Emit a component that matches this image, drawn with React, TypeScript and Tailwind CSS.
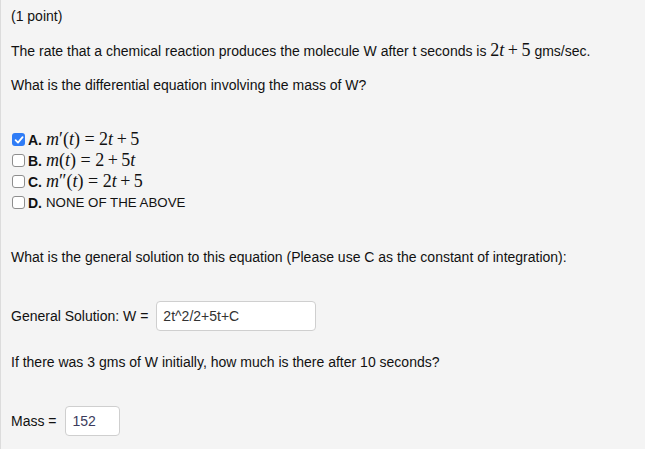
import React from 'react';

const sans = "font-['Helvetica','Liberation_Sans',Arial,sans-serif]";
const serif = "font-['Liberation_Serif','Times_New_Roman',serif]";

function M({ children }: { children: React.ReactNode }) {
    return <span className={`${serif} text-[18px] leading-none`}>{children}</span>;
}

function I({ children }: { children: React.ReactNode }) {
    return <i>{children}</i>;
}

// operator with MathJax-like spacing
function Op({ children, rel }: { children: React.ReactNode; rel?: boolean }) {
    return <span className={rel ? 'mx-[4.5px]' : 'mx-[3.5px]'}>{children}</span>;
}

function Box({ checked }: { checked?: boolean }) {
    return checked ? (
        <span className="inline-flex w-[13px] h-[13px] rounded-[3px] bg-[#2f7cf6] items-center justify-center">
            <svg width="10" height="10" viewBox="0 0 10 10">
                <path d="M1.6 5.2 L4 7.6 L8.6 2.2" fill="none" stroke="white" strokeWidth="1.8" strokeLinecap="round" strokeLinejoin="round" />
            </svg>
        </span>
    ) : (
        <span className="inline-block w-[13px] h-[13px] rounded-[3px] border border-[#8e8e8e] bg-white" />
    );
}

export default function App() {
    const options = [
        { key: 'A.', checked: true, body: <M><I>m</I>′(<I>t</I>)<Op rel>=</Op>2<I>t</I><Op>+</Op>5</M> },
        { key: 'B.', checked: false, body: <M><I>m</I>(<I>t</I>)<Op rel>=</Op>2<Op>+</Op>5<I>t</I></M> },
        { key: 'C.', checked: false, body: <M><I>m</I>″(<I>t</I>)<Op rel>=</Op>2<I>t</I><Op>+</Op>5</M> },
        { key: 'D.', checked: false, body: <span className="text-[13.3px]">NONE OF THE ABOVE</span> },
    ];

    return (
        <div className={`w-[645px] h-[449px] bg-[#f4f4f4] border-l border-[#dcdcdc] pl-[10px] pt-[7px] text-[14px] leading-[18px] text-[#111] ${sans}`}>
            <p>(1 point)</p>
            <p className="mt-[16px]">
                The rate that a chemical reaction produces the molecule W after t seconds is <M>2<I>t</I><Op>+</Op>5</M> gms/sec.
            </p>
            <p className="mt-[16px]">What is the differential equation involving the mass of W?</p>

            <div className="mt-[35px] flex flex-col">
                {options.map(o => (
                    <div key={o.key} className="h-[21px] flex items-center pl-[1px]">
                        <Box checked={o.checked} />
                        <span className="ml-[3px] font-bold">{o.key}</span>
                        <span className="ml-[4px]">{o.body}</span>
                    </div>
                ))}
            </div>

            <p className="mt-[35px]">What is the general solution to this equation (Please use C as the constant of integration):</p>

            <div className="mt-[35px] flex items-center">
                <span>General Solution: W =</span>
                <div className="ml-[8px] w-[160px] h-[30px] bg-white border border-[#cfcfcf] rounded-[4px] flex items-center px-[6px] text-[14px] text-[#333]">
                    2t^2/2+5t+C
                </div>
            </div>

            <p className="mt-[22px]">If there was 3 gms of W initially, how much is there after 10 seconds?</p>

            <div className="mt-[35px] flex items-center">
                <span>Mass =</span>
                <div className="ml-[8px] w-[55px] h-[30px] bg-white border border-[#cfcfcf] rounded-[4px] flex items-center px-[7px] text-[14px] text-[#3b3b5c]">
                    152
                </div>
            </div>
        </div>
    );
}
